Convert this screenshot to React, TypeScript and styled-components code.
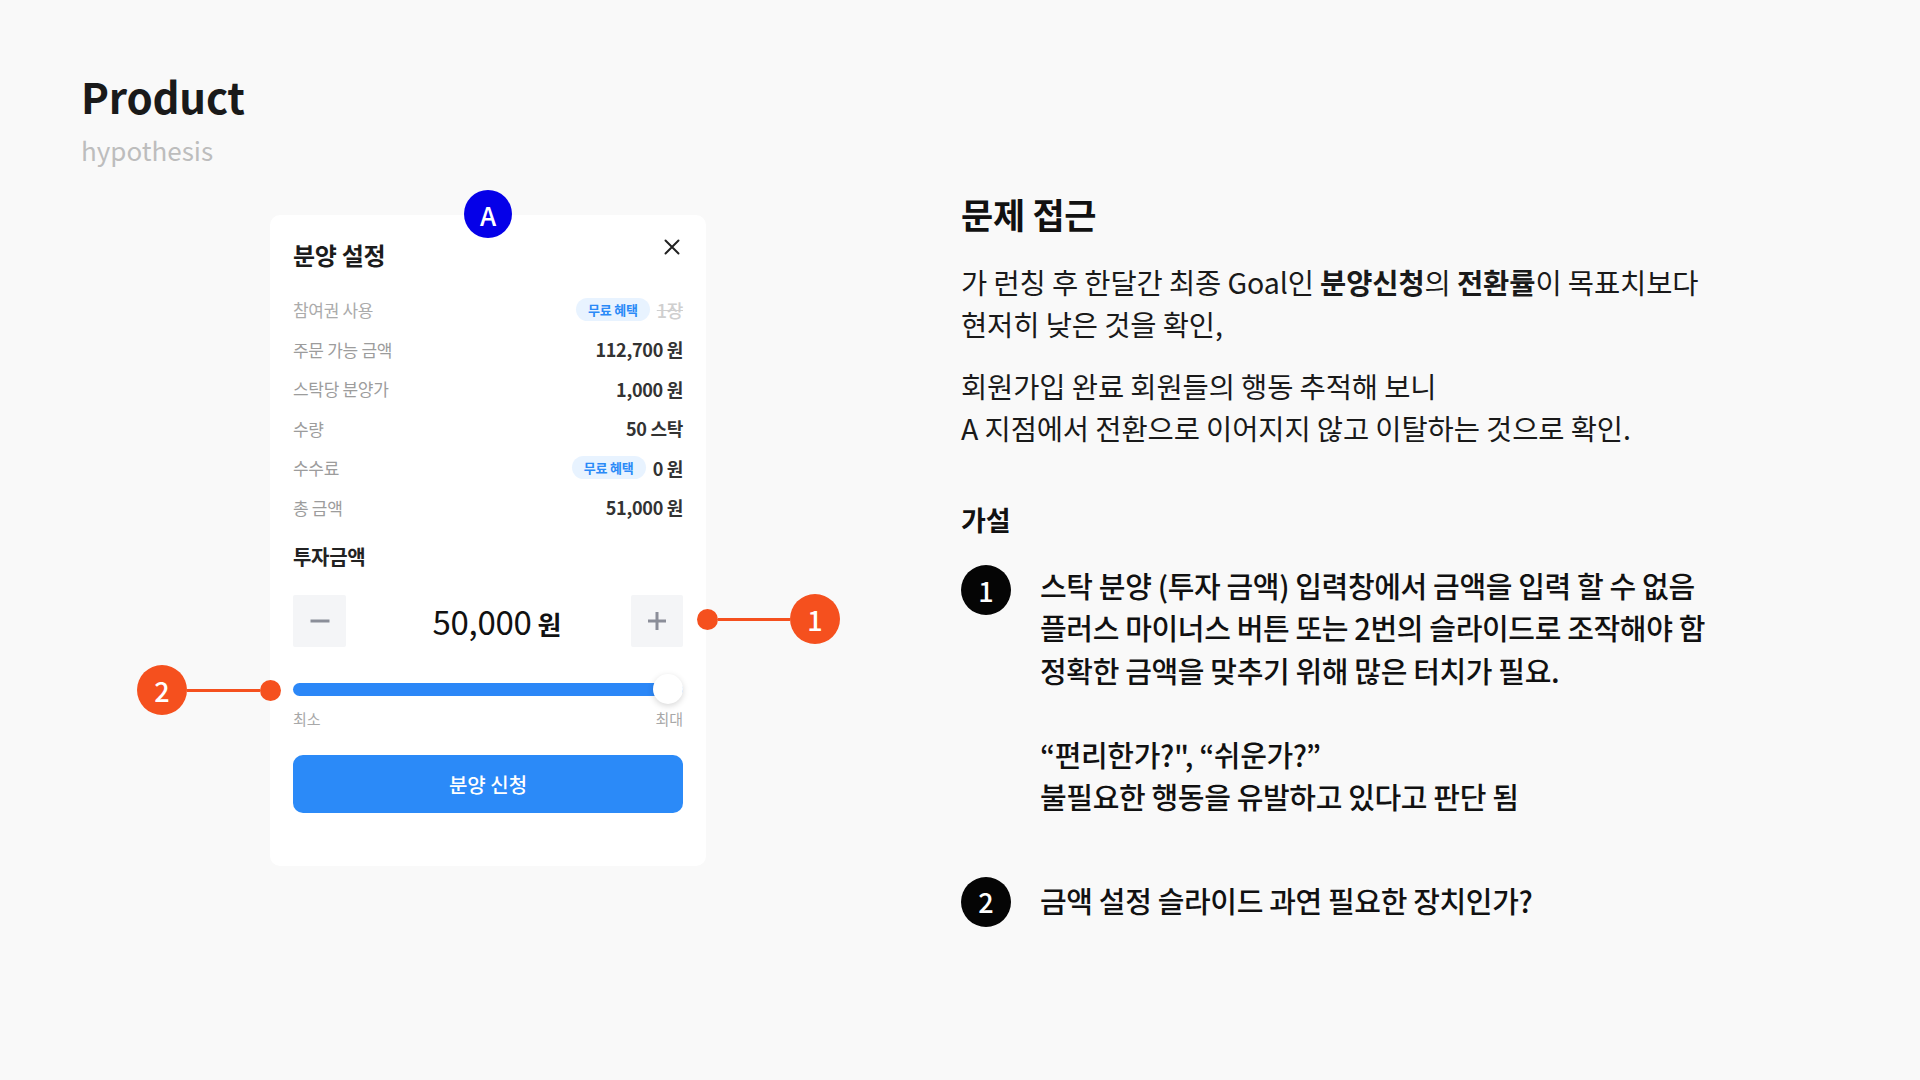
import React from "react";
import styled, { createGlobalStyle } from "styled-components";

const GlobalStyle = createGlobalStyle`
  html, body { margin: 0; padding: 0; }
  body {
    background: #f9f9f9;
    font-family: "Noto Sans CJK KR", "Noto Sans", sans-serif;
    width: 1920px;
    height: 1080px;
    overflow: hidden;
  }
  * { box-sizing: border-box; }
`;

const Page = styled.div`
  display: flex;
  width: 1920px;
  height: 1080px;
  background: #f9f9f9;
`;

const LeftCol = styled.div`
  width: 961px;
  flex: none;
  padding-left: 81px;
  padding-top: 71px;
`;

const Title = styled.h1`
  margin: 0;
  font-size: 42px;
  line-height: 50px;
  font-weight: 700;
  color: #1a1a1a;
  letter-spacing: -0.2px;
`;

const Subtitle = styled.div`
  margin-top: 13px;
  font-size: 26px;
  line-height: 32px;
  color: #bdbdbd;
`;

const Card = styled.div`
  position: relative;
  width: 436px;
  margin-left: 189px;
  margin-top: 49px;
  background: #ffffff;
  border-radius: 10px;
  padding: 25px 23px 53px;
`;

const PointBadge = styled.div`
  position: absolute;
  left: 50%;
  top: -25px;
  width: 48px;
  height: 48px;
  margin-left: -24px;
  border-radius: 50%;
  background: #0500e8;
  color: #fff;
  display: flex;
  align-items: center;
  justify-content: center;
  font-size: 26px;
  font-weight: 500;
`;

const CardHeader = styled.div`
  display: flex;
  justify-content: space-between;
  align-items: flex-start;
  height: 30px;
`;

const CardTitle = styled.h2`
  margin: 0;
  font-size: 24px;
  line-height: 30px;
  font-weight: 700;
  color: #1c1c1c;
  letter-spacing: -0.3px;
`;

const CloseButton = styled.button`
  border: none;
  background: none;
  padding: 0;
  margin: -2px 2px 0 0;
  width: 18px;
  height: 18px;
  display: flex;
  color: #222;
`;

const InfoList = styled.div`
  margin-top: 20px;
  display: flex;
  flex-direction: column;
`;

const InfoRow = styled.div`
  height: 39.5px;
  display: flex;
  align-items: center;
  justify-content: space-between;
`;

const InfoLabel = styled.span<{ $light?: boolean }>`
  font-size: 17px;
  color: ${(p) => (p.$light ? "#ababab" : "#9c9c9c")};
  letter-spacing: -0.3px;
`;

const InfoValue = styled.span`
  display: flex;
  align-items: center;
  gap: 7px;
  font-size: 18px;
  font-weight: 600;
  color: #333;
  letter-spacing: -0.3px;
`;

const Benefit = styled.span`
  display: inline-flex;
  align-items: center;
  height: 23px;
  padding: 0 12px;
  border-radius: 12px;
  background: #e8f3ff;
  color: #2b8af7;
  font-size: 13px;
  font-weight: 700;
  letter-spacing: -0.2px;
`;

const Struck = styled.span`
  color: #cfcfcf;
  font-weight: 500;
  text-decoration: line-through;
`;

const SectionLabel = styled.div`
  margin-top: 17px;
  font-size: 20px;
  line-height: 26px;
  font-weight: 700;
  color: #222;
  letter-spacing: -0.3px;
`;

const Stepper = styled.div`
  margin-top: 25px;
  display: grid;
  grid-template-columns: 53px 1fr 52px;
  height: 52px;
`;

const StepButton = styled.button`
  border: none;
  padding: 0;
  background: #f4f5f7;
  border-radius: 2px;
  display: flex;
  align-items: center;
  justify-content: center;
`;

const Amount = styled.div`
  display: flex;
  align-items: baseline;
  justify-content: center;
  gap: 6px;
  padding-top: 5px;
  padding-left: 17px;
  color: #111;
`;

const AmountNumber = styled.span`
  font-size: 33px;
  line-height: 42px;
  font-weight: 400;
  letter-spacing: -0.3px;
`;

const AmountUnit = styled.span`
  font-size: 26px;
  font-weight: 700;
`;

const Slider = styled.div`
  position: relative;
  margin-top: 28px;
  height: 28px;
  display: flex;
  align-items: center;
`;

const Track = styled.div`
  width: 100%;
  height: 13px;
  border-radius: 7px;
  background: #2b87f7;
`;

const Thumb = styled.div`
  position: absolute;
  right: 0;
  top: -1px;
  width: 30px;
  height: 30px;
  border-radius: 50%;
  background: #fff;
  box-shadow: 0 2px 6px rgba(0, 0, 0, 0.16);
`;

const RangeLabels = styled.div`
  margin-top: 7px;
  display: flex;
  justify-content: space-between;
  font-size: 15px;
  line-height: 18px;
  color: #a8a8a8;
`;

const SubmitButton = styled.button`
  margin-top: 27px;
  width: 100%;
  height: 58px;
  border: none;
  border-radius: 10px;
  background: #2b8af8;
  color: #fff;
  font-family: inherit;
  font-size: 20px;
  font-weight: 500;
`;

const Marker = styled.div<{ $left: number; $top: number }>`
  position: absolute;
  left: ${(p) => p.$left}px;
  top: ${(p) => p.$top}px;
  display: flex;
  align-items: center;
`;

const MarkerDot = styled.span`
  width: 21px;
  height: 21px;
  border-radius: 50%;
  background: #f5501e;
  flex: none;
`;

const MarkerLine = styled.span`
  width: 72.5px;
  height: 3px;
  background: #f5501e;
  flex: none;
`;

const MarkerCircle = styled.span`
  width: 50px;
  height: 50px;
  border-radius: 50%;
  background: #f5501e;
  color: #fff;
  display: flex;
  align-items: center;
  justify-content: center;
  font-size: 27px;
  font-weight: 500;
  flex: none;
`;

const RightCol = styled.div`
  flex: 1;
  padding-top: 194px;
  display: flex;
  flex-direction: column;
  color: #111;
`;

const Heading = styled.h2`
  margin: 0;
  font-size: 35px;
  line-height: 40px;
  font-weight: 700;
  letter-spacing: -0.3px;
`;

const Paragraph = styled.p<{ $gap: number }>`
  margin: ${(p) => p.$gap}px 0 0;
  font-size: 28.5px;
  line-height: 42px;
  font-weight: 400;
  letter-spacing: -0.1px;
  color: #1a1a1a;
`;

const SubHeading = styled.h3`
  margin: 54px 0 0;
  font-size: 27px;
  line-height: 34px;
  font-weight: 700;
`;

const Hypothesis = styled.div<{ $gap: number }>`
  margin-top: ${(p) => p.$gap}px;
  display: flex;
  align-items: flex-start;
  gap: 29px;
`;

const NumberBadge = styled.span<{ $offset: number }>`
  flex: none;
  width: 50px;
  height: 50px;
  margin-top: ${(p) => p.$offset}px;
  border-radius: 50%;
  background: #050505;
  color: #fff;
  display: flex;
  align-items: center;
  justify-content: center;
  font-size: 27px;
  font-weight: 500;
`;

const HypothesisText = styled.div`
  font-size: 29px;
  line-height: 42.3px;
  font-weight: 500;
  letter-spacing: -0.35px;
  color: #111;
`;

const rows: { label: string; value: React.ReactNode; light?: boolean }[] = [
  {
    label: "참여권 사용",
    light: true,
    value: (
      <>
        <Benefit>무료 혜택</Benefit>
        <Struck>1장</Struck>
      </>
    ),
  },
  { label: "주문 가능 금액", value: "112,700 원" },
  { label: "스탁당 분양가", value: "1,000 원" },
  { label: "수량", value: "50 스탁" },
  {
    label: "수수료",
    value: (
      <>
        <Benefit>무료 혜택</Benefit>
        <span>0 원</span>
      </>
    ),
  },
  { label: "총 금액", value: "51,000 원" },
];

export default function App() {
  return (
    <>
      <GlobalStyle />
      <Page>
        <LeftCol>
          <Title>Product</Title>
          <Subtitle>hypothesis</Subtitle>
          <Card>
            <PointBadge>A</PointBadge>
            <CardHeader>
              <CardTitle>분양 설정</CardTitle>
              <CloseButton aria-label="닫기">
                <svg width="18" height="18" viewBox="0 0 18 18">
                  <path d="M2.5 2.5 L15.5 15.5 M15.5 2.5 L2.5 15.5" stroke="currentColor" strokeWidth="2" strokeLinecap="round" />
                </svg>
              </CloseButton>
            </CardHeader>
            <InfoList>
              {rows.map((r) => (
                <InfoRow key={r.label}>
                  <InfoLabel $light={r.light}>{r.label}</InfoLabel>
                  <InfoValue>{r.value}</InfoValue>
                </InfoRow>
              ))}
            </InfoList>
            <SectionLabel>투자금액</SectionLabel>
            <Stepper>
              <StepButton aria-label="감소">
                <svg width="20" height="20" viewBox="0 0 20 20">
                  <path d="M0.5 10 H19.5" stroke="#8b8e99" strokeWidth="3" />
                </svg>
              </StepButton>
              <Amount>
                <AmountNumber>50,000</AmountNumber>
                <AmountUnit>원</AmountUnit>
              </Amount>
              <StepButton aria-label="증가">
                <svg width="20" height="20" viewBox="0 0 20 20">
                  <path d="M1 10 H19 M10 1 V19" stroke="#8b8e99" strokeWidth="3" />
                </svg>
              </StepButton>
            </Stepper>
            <Slider>
              <Track />
              <Thumb />
            </Slider>
            <RangeLabels>
              <span>최소</span>
              <span>최대</span>
            </RangeLabels>
            <SubmitButton>분양 신청</SubmitButton>

            <Marker $left={426.5} $top={379}>
              <MarkerDot />
              <MarkerLine />
              <MarkerCircle>1</MarkerCircle>
            </Marker>
            <Marker $left={-133} $top={450}>
              <MarkerCircle>2</MarkerCircle>
              <MarkerLine />
              <MarkerDot />
            </Marker>
          </Card>
        </LeftCol>

        <RightCol>
          <Heading>문제 접근</Heading>
          <Paragraph $gap={27}>
            가 런칭 후 한달간 최종 Goal인 <b>분양신청</b>의 <b>전환률</b>이 목표치보다
            <br />
            현저히 낮은 것을 확인,
          </Paragraph>
          <Paragraph $gap={20}>
            회원가입 완료 회원들의 행동 추적해 보니
            <br />
            A 지점에서 전환으로 이어지지 않고 이탈하는 것으로 확인.
          </Paragraph>
          <SubHeading>가설</SubHeading>
          <Hypothesis $gap={27}>
            <NumberBadge $offset={1}>1</NumberBadge>
            <HypothesisText>
              스탁 분양 (투자 금액) 입력창에서 금액을 입력 할 수 없음
              <br />
              플러스 마이너스 버튼 또는 2번의 슬라이드로 조작해야 함
              <br />
              정확한 금액을 맞추기 위해 많은 터치가 필요.
              <br />
              <br />
              “편리한가?", “쉬운가?”
              <br />
              불필요한 행동을 유발하고 있다고 판단 됨
            </HypothesisText>
          </Hypothesis>
          <Hypothesis $gap={61}>
            <NumberBadge $offset={-2}>2</NumberBadge>
            <HypothesisText>금액 설정 슬라이드 과연 필요한 장치인가?</HypothesisText>
          </Hypothesis>
        </RightCol>
      </Page>
    </>
  );
}
